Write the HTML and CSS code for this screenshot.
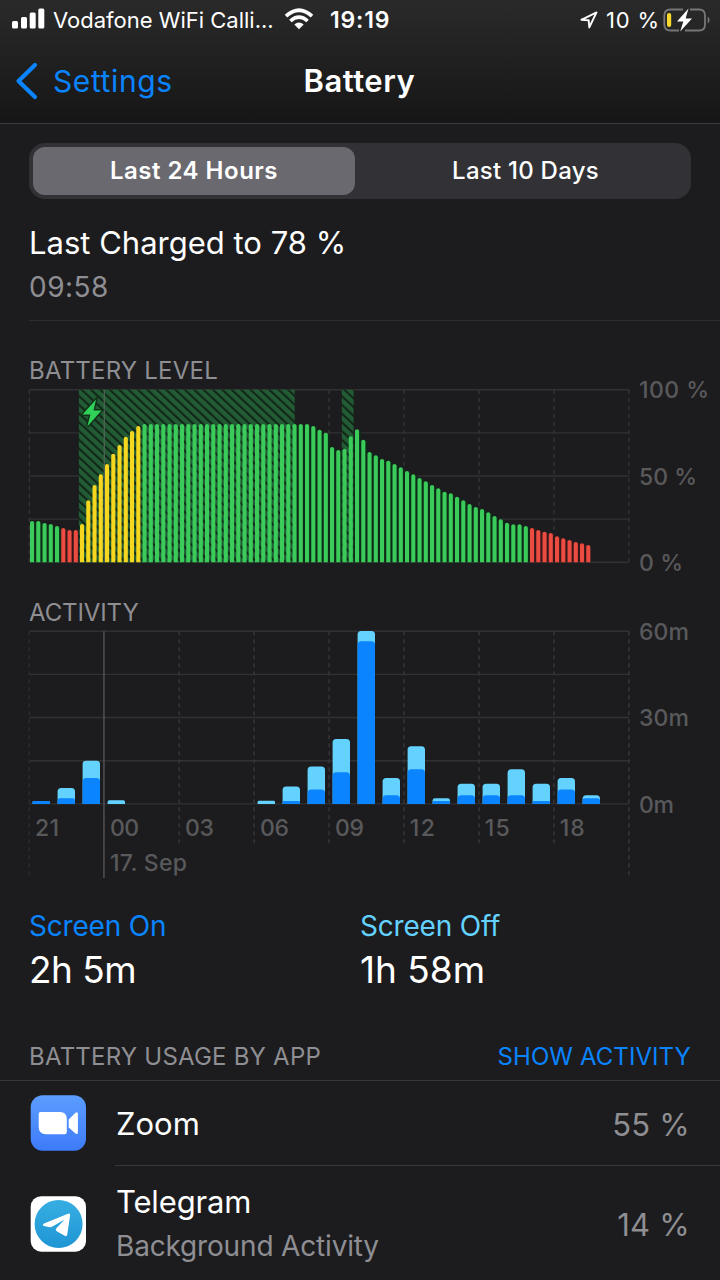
FILE: index.html
```html
<!DOCTYPE html>
<html lang="en">
<head>
<meta charset="utf-8">
<title>Battery</title>
<link rel="stylesheet" href="styles.css">
</head>
<body>
<header class="top">
  <div class="status">
    <svg class="signal" width="33" height="21" viewBox="0 0 33 21" fill="#fff"><rect x="0" y="13" width="6" height="7.5" rx="1.5"/><rect x="9" y="9" width="6" height="11.5" rx="1.5"/><rect x="17.7" y="4.5" width="6" height="16" rx="1.5"/><rect x="26.3" y="0.5" width="6" height="20" rx="1.5"/></svg>
    <span class="carrier">Vodafone WiFi Calli...</span>
    <svg class="wifi" width="30" height="22" viewBox="0 0 30 22"><g fill="none" stroke="#fff" stroke-width="3.7"><path d="M2 8.2Q15-3.7 28 8.2"/><path d="M6.4 13Q15 5.2 23.6 13"/></g><path d="M10.3 16.4Q15 12.4 19.7 16.4L15 21.3Z" fill="#fff"/></svg>
    <span class="clock">19:19</span>
    <svg class="location" width="18" height="18" viewBox="0 0 18 18"><path d="M1.4 8.8L16.5 1.4L9.3 16.4L8.7 9.3Z" fill="none" stroke="#fff" stroke-width="1.9" stroke-linejoin="round"/></svg>
    <span class="percent">10 %</span>
    <svg class="cell" width="48" height="24" viewBox="0 0 48 24"><path d="M16 22.5H7.5Q1.3 22.5 1.3 16.5V7.5Q1.3 1.5 7.5 1.5H20M27 1.5H36Q42 1.5 42 7.5V16.5Q42 22.5 36 22.5H22" fill="none" stroke="#77777a" stroke-width="1.8"/><path d="M44.7 8.5Q46.6 9.5 46.6 12T44.7 15.5Z" fill="#77777a"/><rect x="4" y="5" width="4.2" height="14" rx="2" fill="#f8d82a"/><path d="M25.5.5L14 13.5H20.3L17.2 23.5L29 10.5H22.6Z" fill="#fff"/></svg>
  </div>
  <nav class="nav">
    <a class="back"><svg width="24" height="38" viewBox="0 0 24 38"><path d="M20 3L3.5 19L20 35" fill="none" stroke="#0a84ff" stroke-width="4.2" stroke-linecap="round" stroke-linejoin="round"/></svg><span class="back-label">Settings</span></a>
    <h1 class="title">Battery</h1>
  </nav>
</header>
<main>
  <div class="segments"><button class="segment segment-on">Last 24 Hours</button><button class="segment segment-off">Last 10 Days</button></div>
  <section class="charged"><div class="charged-title">Last Charged to 78 %</div><div class="charged-time">09:58</div></section>
  <h2 class="caption level-caption">BATTERY LEVEL</h2>
  <svg class="plot" id="level" width="720" height="202" viewBox="0 380 720 202"></svg>
  <h2 class="caption activity-caption">ACTIVITY</h2>
  <svg class="plot" id="activity" width="720" height="260" viewBox="0 622 720 260"></svg>
  <section class="totals">
    <div><div class="total-name on">Screen On</div><div class="total-value v-on">2h 5m</div></div>
    <div><div class="total-name off">Screen Off</div><div class="total-value v-off">1h 58m</div></div>
  </section>
  <div class="usage-head"><h2 class="caption usage-caption">BATTERY USAGE BY APP</h2><a class="show">SHOW ACTIVITY</a></div>
  <div class="app zoom-app">
    <svg class="icon" width="56" height="56" viewBox="0 0 56 56"><defs><linearGradient id="zoomFill" x2="0" y2="1"><stop stop-color="#5b9dff"/><stop offset="1" stop-color="#3d7bf8"/></linearGradient></defs><rect width="55.3" height="55.5" x=".7" y=".2" rx="12" fill="url(#zoomFill)"/><path d="M10.5 17H30Q36.8 17 36.8 24V37Q36.8 39.2 34.7 39.2H16Q8.7 39.2 8.7 32V19Q8.7 17 10.5 17ZM38.7 24.5L45.5 17.8Q47.9 16.2 47.9 19V37.2Q47.9 40 45.5 38.4L38.7 32.5Z" fill="#fff"/></svg>
    <div class="app-row"><div class="app-name n-zoom">Zoom</div><div class="app-value">55 %</div></div>
  </div>
  <div class="app telegram-app">
    <svg class="icon" width="56" height="56" viewBox="0 0 56 56"><defs><linearGradient id="telegramFill" x2="0" y2="1"><stop stop-color="#37aee2"/><stop offset="1" stop-color="#1e96d4"/></linearGradient></defs><rect width="55.3" height="55.5" x=".7" y=".2" rx="10.5" fill="#fff"/><circle cx="28.6" cy="28" r="24" fill="url(#telegramFill)"/><path d="M14 27.4L38 17.8Q40.3 17 40.1 19.5L37.3 38.2Q36.9 41.2 34.3 39.6L27.1 35.4Q24.7 34 26.6 32L34.6 23.6L22.4 30.6Q20.5 31.6 18.6 31L14 30Q11.8 28.7 14 27.4Z" fill="#fff"/></svg>
    <div class="app-row"><div><div class="app-name n-telegram">Telegram</div><div class="app-note">Background Activity</div></div><div class="app-value">14 %</div></div>
  </div>
</main>
<script src="charts.js"></script>
</body>
</html>
```
FILE: styles.css
```css
* { box-sizing: border-box; }
body { margin: 0; width: 720px; height: 1280px; overflow: hidden; background: #1c1c1e; color: #fff; font-family: Inter, "Liberation Sans", sans-serif; }
h1, h2 { margin: 0; font-weight: 400; }
span, h1, h2, .charged div, .totals div, .app div, button, a { white-space: nowrap; }
svg { display: block; flex: none; }
.plot { overflow: visible; }
.top { height: 124px; background: linear-gradient(#2a2a2a, #161616); border-bottom: 1px solid #3a3a3c; }
.status { height: 40px; display: flex; align-items: center; padding-left: 12px; font-size: 22px; line-height: 40px; }
.signal { margin-top: -3px; }
.carrier { width: 221px; margin-left: 8px; }
.wifi { margin: -2px 0 0 10px; }
.clock { width: 62px; margin-left: 16px; font-size: 23px; font-weight: 600; letter-spacing: .8px; }
.location { margin-left: 188px; }
.percent { width: 53px; margin-left: 8px; letter-spacing: .8px; }
.cell { margin: -12px 0 -12px 4px; }
.nav { height: 83px; display: flex; align-items: center; padding-bottom: 2px; }
.back { display: flex; align-items: center; width: 175px; padding-left: 15px; color: #0a84ff; font-size: 30px; letter-spacing: .6px; }
.back-label { margin-left: 14px; }
.title { margin-left: 128.5px; font-size: 31px; font-weight: 600; letter-spacing: .5px; }
.segments { margin: 19px 29px 0; height: 56px; padding: 4px; display: grid; grid-template-columns: 322px 1fr; border-radius: 16px; background: #323236; }
.segment { border: 0; padding: 0 0 1px; border-radius: 12px; background: none; color: #fff; font: 500 24px Inter, sans-serif; letter-spacing: .25px; }
.segment-on { background: #6a6970; font-weight: 600; letter-spacing: .5px; }
.segment-off { padding-left: 9px; }
.charged { margin-left: 29px; height: 122px; padding-top: 24px; border-bottom: 1px solid #2e2e30; }
.charged-title { font-size: 31px; line-height: 40px; }
.charged-time { font-size: 28px; line-height: 40px; margin-top: 4px; color: #8e8e93; letter-spacing: .5px; }
.caption { font-size: 24px; line-height: 30px; color: #8e8e93; margin-left: 29px; letter-spacing: .22px; }
.level-caption { margin-top: 35px; height: 24px; }
.activity-caption { margin-top: 16px; height: 24px; letter-spacing: -.1px; }
.tick { font: 500 23px Inter, sans-serif; fill: #59595c; }
.totals { height: 122px; padding: 24px 0 0 29px; display: grid; grid-template-columns: 331px 1fr; align-content: start; }
.total-name { font-size: 28px; line-height: 40px; letter-spacing: -.2px; }
.total-value { font-size: 37px; line-height: 48px; }
.v-on { letter-spacing: -.5px; }
.on { color: #0a84ff; }
.off { color: #64d2ff; }
.usage-head { height: 77px; display: flex; justify-content: space-between; padding: 38px 29px 0 0; border-bottom: 1px solid #38383a; }
.show { font-size: 24px; line-height: 30px; color: #0a84ff; letter-spacing: .08px; }
.app { display: flex; align-items: center; padding-left: 30px; }
.app-row { flex: 1; height: 100%; margin-left: 29px; padding: 0 30px 0 1px; display: flex; justify-content: space-between; align-items: center; position: relative; }
.zoom-app { height: 84px; }
.zoom-app .app-row { padding-top: 2px; }
.zoom-app .app-row::after { content: ""; position: absolute; left: 0; right: 0; bottom: -1px; height: 1px; background: #38383a; }
.telegram-app { height: 118px; }
.app-name { font-size: 31px; line-height: 44px; }
.n-telegram { letter-spacing: -.15px; }
.app-note { font-size: 28px; line-height: 44px; color: #8e8e93; letter-spacing: -.17px; }
.app-value { font-size: 31px; color: #8e8e93; letter-spacing: .25px; }
```
FILE: charts.js
```javascript
const left = 29.3;
const hours = [0, 1, 2, 3, 4, 5, 6, 7, 8].map(n => left + n * 74.95);
const line = (x1, y1, x2, y2, color, dash = '') =>
  `<line x1="${x1}" y1="${y1}" x2="${x2}" y2="${y2}" stroke="${color}" stroke-width="1.4" stroke-dasharray="${dash}"/>`;
const label = (x, y, text, width) =>
  `<text class="tick" x="${x}" y="${y}" textLength="${width}">${text}</text>`;
const grid = (top, bottom) =>
  [0, 1, 2, 3, 4].map(n => top + n * (bottom - top) / 4).map(y => line(left, y, 629.3, y, '#313133')).join('');

// Battery level, one bar per quarter of an hour
const tops = [521, 521, 523, 524, 526, 528, 530, 530, 524, 500.3, 485, 474.3, 464, 453.7, 445, 436.7, 431, 426,
  ...Array(27).fill(424), 426, 429.8, 432.7, 447, 450, 448.7, 436.3, 429.3, 439.7, 452, 455.3, 459, 460.7, 464, 467.3,
  471, 474.3, 478, 481.3, 485, 488.3, 491.7, 493.3, 496.7, 500.3, 504, 507, 509, 512.3, 516, 519.3, 522.7, 524.3,
  524.3, 526, 528, 530, 531.7, 533, 536.3, 538.3, 540, 542, 543.3, 545];
const base = 562.3;
let level = `<defs><pattern id="hatch" width="6.4" height="6.4" patternUnits="userSpaceOnUse" patternTransform="rotate(-47)">
  <rect width="6.4" height="6.4" fill="#225c35"/><rect width="2.1" height="6.4" fill="#112718"/></pattern></defs>`;
level += grid(389.7, base);
level += hours.map(x => line(x, 389.7, x, base, '#353537', '4 4')).join('');
level += tops.map((y, i) => `<rect x="${30 + i * 6.25}" y="${y + 1}" width="${i === 89 ? 4 : 6.25}" height="${base - y - 1}" fill="${i > 79 || (i > 4 && i < 8) ? '#361819' : '#0d2b17'}"/>`).join('');
level += `<rect x="78.9" y="389.7" width="215.8" height="172.6" fill="url(#hatch)"/><rect x="341.8" y="389.7" width="11.8" height="172.6" fill="url(#hatch)"/>`;
level += line(104.3, 389.7, 104.3, base, '#4b6352');
level += tops.map((y, i) => {
  const x = 30 + i * 6.25;
  const color = (i > 4 && i < 8) || i > 79 ? '#eb4b40' : i > 7 && i < 18 ? '#f5d720' : '#3bcb5b';
  return `<path d="M${x} ${base}V${y + 1.8}Q${x} ${y} ${x + 2} ${y}T${x + 4.1} ${y + 1.8}V${base}Z" fill="${color}"/>`;
}).join('');
level += '<path d="M96 399.5L82.5 414.5H90.5L87.3 426.5L101.5 410.5H93.5Z" fill="#30d158" stroke="#123219" stroke-width="3" paint-order="stroke"/>';
level += label(639, 398, '100 %', 70) + label(639, 484.5, '50 %', 58) + label(639, 571, '0 %', 44);
document.getElementById('level').innerHTML = level;

// Minutes of use per hour: [index, total, with screen on]
const use = [[0, 1, 1], [1, 5.5, 2], [2, 15, 9], [3, 1.3, 0], [9, 1.1, 0], [10, 6, 1], [11, 13, 5], [12, 22.5, 11],
  [13, 60, 56.5], [14, 9, 3], [15, 20, 12], [16, 2, 1], [17, 7, 3], [18, 7, 3], [19, 12, 3], [20, 7, 1], [21, 9, 5], [22, 3, 2]];
const zero = 803.9;
const bar = (x, minutes, color) => {
  const y = zero - minutes * 2.88;
  const r = Math.min(3.5, minutes * 1.2);
  return `<path d="M${x} ${zero}V${y + r}Q${x} ${y} ${x + r} ${y}H${x + 17.4 - r}Q${x + 17.4} ${y} ${x + 17.4} ${y + r}V${zero}Z" fill="${color}"/>`;
};
let activity = grid(631.2, zero);
activity += hours.map((x, i) => i === 1
  ? line(x - .3, 631.2, x - .3, 878, '#555558')
  : line(x, 631.2, x, i === 0 || i === 8 ? 878 : 847, i === 0 ? '#2c2c2e' : '#39393b', '4 4')).join('');
activity += use.map(([i, total, on]) => bar(32.6 + i * 25, total, '#64d2ff') + (on ? bar(32.6 + i * 25, on, '#0a84ff') : '')).join('');
const widths = [24, 29, 29, 29, 29, 25, 25, 25];
activity += ['21', '00', '03', '06', '09', '12', '15', '18'].map((t, i) => label(hours[i] + 5.8, 836, t, widths[i])).join('');
activity += label(110, 871, '17. Sep', 77) + label(639, 640, '60m', 50) + label(639, 726, '30m', 50) + label(639, 812.5, '0m', 35);
document.getElementById('activity').innerHTML = activity;
```
